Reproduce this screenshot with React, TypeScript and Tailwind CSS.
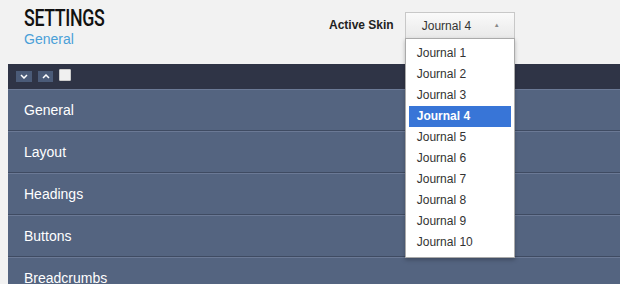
import { useState } from "react";

const skins = [
  "Journal 1",
  "Journal 2",
  "Journal 3",
  "Journal 4",
  "Journal 5",
  "Journal 6",
  "Journal 7",
  "Journal 8",
  "Journal 9",
  "Journal 10",
];

const sections = ["General", "Layout", "Headings", "Buttons", "Breadcrumbs"];

export default function App() {
  const [skin, setSkin] = useState("Journal 4");

  return (
    <div className="w-[620px] h-[284px] overflow-hidden bg-[#f2f2f2] font-['Liberation_Sans',Arial,sans-serif]">
      {/* header */}
      <div className="relative h-[64px] flex items-start">
        <div className="pl-[24px] pt-[6px]">
          <h1 className="font-['Roboto',sans-serif] font-medium text-[24px] leading-[24px] text-[#111] tracking-[-0.5px] origin-left scale-x-[0.74] w-[70px] whitespace-nowrap">
            SETTINGS
          </h1>
          <div className="text-[14px] leading-[16px] text-[#4aa0d8] mt-[1px]">General</div>
        </div>
        <div className="absolute left-[329px] top-[12px] flex items-start">
          <span className="text-[12px] font-bold text-[#222] leading-[26px] mr-[11px]">Active Skin</span>
          <div className="relative">
            <div className="w-[110px] h-[27px] border border-[#c8c8c8] bg-gradient-to-b from-[#fafafa] to-[#e9e9e9] flex items-center pl-[16px] pr-[14px] justify-between">
              <span className="text-[12px] text-[#333]">{skin}</span>
              <span className="text-[6px] text-[#888]">▲</span>
            </div>
            <ul className="absolute left-0 top-[26px] w-[110px] bg-white border border-[#aaa] shadow-[0_2px_4px_rgba(0,0,0,0.25)] py-[4px] px-[3px] z-10">
              {skins.map((s) => (
                <li
                  key={s}
                  onClick={() => setSkin(s)}
                  className={`h-[21px] leading-[21px] pl-[8px] text-[12px] cursor-pointer ${
                    s === skin ? "bg-[#3875d7] text-white font-bold" : "text-[#333]"
                  }`}
                >
                  {s}
                </li>
              ))}
            </ul>
          </div>
        </div>
      </div>

      {/* panel */}
      <div className="ml-[8px]">
        <div className="h-[25px] bg-[#2f3446] flex items-center pl-[8px] gap-[6px]">
          <button className="w-[16px] h-[11px] bg-[#4b5b78] flex items-center justify-center">
            <svg width="8" height="5" viewBox="0 0 8 5">
              <path d="M1 1 L4 4 L7 1" stroke="white" strokeWidth="1.5" fill="none" />
            </svg>
          </button>
          <button className="w-[15px] h-[11px] bg-[#4b5b78] flex items-center justify-center">
            <svg width="8" height="5" viewBox="0 0 8 5">
              <path d="M1 4 L4 1 L7 4" stroke="white" strokeWidth="1.5" fill="none" />
            </svg>
          </button>
          <span className="w-[12px] h-[12px] bg-[#f0f0f0] border border-[#ccc] rounded-[1px] -mt-[4px]"></span>
        </div>
        {sections.map((s) => (
          <div
            key={s}
            className="h-[42px] bg-[#546480] border-t border-t-[#6b7995] border-b border-b-[#3f4b62] flex items-center pl-[16px]"
          >
            <span className="text-[14px] text-white">{s}</span>
          </div>
        ))}
      </div>
    </div>
  );
}
